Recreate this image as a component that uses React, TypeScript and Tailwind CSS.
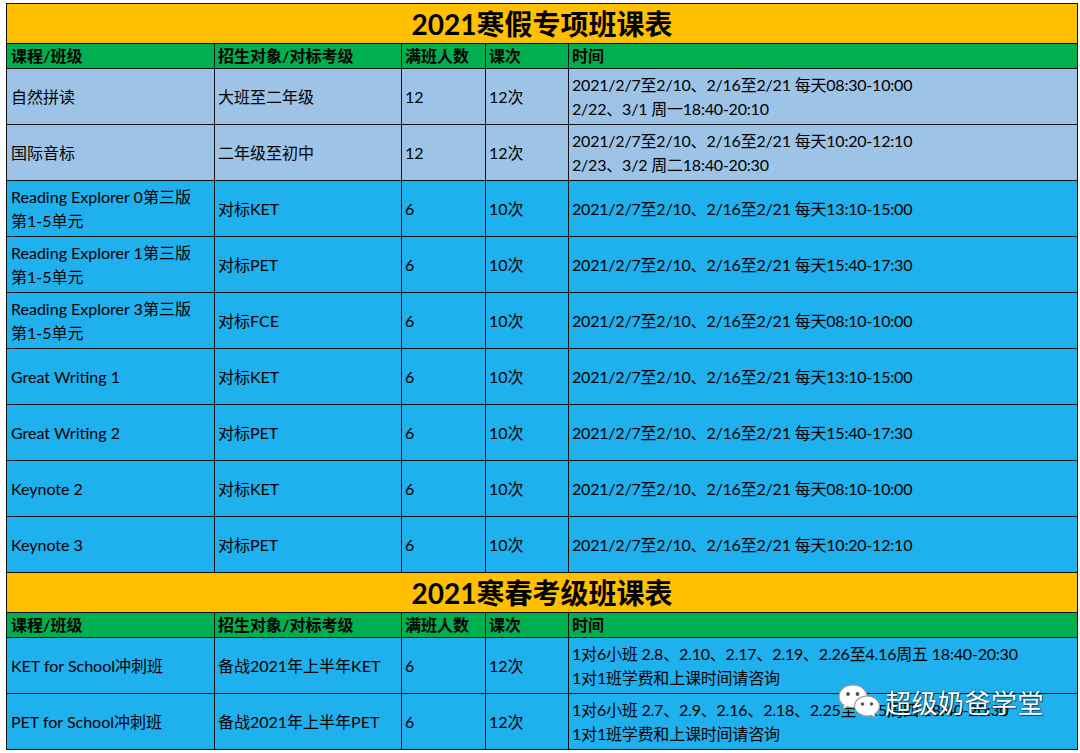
import React from "react";

type Row = {
  name: string[];
  target: string;
  size: string;
  count: string;
  time: string[];
  light?: boolean;
};

const WINTER: Row[] = [
  {
    name: ["自然拼读"],
    target: "大班至二年级",
    size: "12",
    count: "12次",
    time: ["2021/2/7至2/10、2/16至2/21 每天08:30-10:00", "2/22、3/1 周一18:40-20:10"],
    light: true,
  },
  {
    name: ["国际音标"],
    target: "二年级至初中",
    size: "12",
    count: "12次",
    time: ["2021/2/7至2/10、2/16至2/21 每天10:20-12:10", "2/23、3/2 周二18:40-20:30"],
    light: true,
  },
  {
    name: ["Reading Explorer 0第三版", "第1-5单元"],
    target: "对标KET",
    size: "6",
    count: "10次",
    time: ["2021/2/7至2/10、2/16至2/21 每天13:10-15:00"],
  },
  {
    name: ["Reading Explorer 1第三版", "第1-5单元"],
    target: "对标PET",
    size: "6",
    count: "10次",
    time: ["2021/2/7至2/10、2/16至2/21 每天15:40-17:30"],
  },
  {
    name: ["Reading Explorer 3第三版", "第1-5单元"],
    target: "对标FCE",
    size: "6",
    count: "10次",
    time: ["2021/2/7至2/10、2/16至2/21 每天08:10-10:00"],
  },
  {
    name: ["Great Writing 1"],
    target: "对标KET",
    size: "6",
    count: "10次",
    time: ["2021/2/7至2/10、2/16至2/21 每天13:10-15:00"],
  },
  {
    name: ["Great Writing 2"],
    target: "对标PET",
    size: "6",
    count: "10次",
    time: ["2021/2/7至2/10、2/16至2/21 每天15:40-17:30"],
  },
  {
    name: ["Keynote 2"],
    target: "对标KET",
    size: "6",
    count: "10次",
    time: ["2021/2/7至2/10、2/16至2/21 每天08:10-10:00"],
  },
  {
    name: ["Keynote 3"],
    target: "对标PET",
    size: "6",
    count: "10次",
    time: ["2021/2/7至2/10、2/16至2/21 每天10:20-12:10"],
  },
];

const SPRING: Row[] = [
  {
    name: ["KET for School冲刺班"],
    target: "备战2021年上半年KET",
    size: "6",
    count: "12次",
    time: ["1对6小班 2.8、2.10、2.17、2.19、2.26至4.16周五 18:40-20:30", "1对1班学费和上课时间请咨询"],
  },
  {
    name: ["PET for School冲刺班"],
    target: "备战2021年上半年PET",
    size: "6",
    count: "12次",
    time: ["1对6小班 2.7、2.9、2.16、2.18、2.25至4.15周四 18:40-20:30", "1对1班学费和上课时间请咨询"],
  },
];

const HEADERS = ["课程/班级", "招生对象/对标考级", "满班人数", "课次", "时间"];

const Title = ({ text }: { text: string }) => (
  <div className="col-span-5 h-[39px] bg-[#ffc000] flex items-center justify-center text-[28px] font-bold leading-none">
    {text}
  </div>
);

const HeaderRow = () => (
  <>
    {HEADERS.map((h, i) => (
      <div
        key={h}
        className={
          "h-[24px] bg-[#00b050] flex items-center font-bold " + (i === 0 ? "pl-[4px]" : "pl-[3px]")
        }
      >
        {h}
      </div>
    ))}
  </>
);

const Cell = ({
  lines,
  light,
  first,
  tight,
}: {
  lines: string[];
  light?: boolean;
  first?: boolean;
  tight?: boolean;
}) => (
  <div
    className={
      "h-[55px] flex flex-col justify-center leading-[24px] whitespace-nowrap overflow-hidden " +
      (light ? "bg-[#9dc3e6] " : "bg-[#1fb0ee] ") +
      (first ? "pl-[4px] " : "pl-[3px] ") +
      (tight ? "tracking-[-0.2px]" : "")
    }
  >
    {lines.map((l) => (
      <div key={l}>{l}</div>
    ))}
  </div>
);

const DataRows = ({ rows }: { rows: Row[] }) => (
  <>
    {rows.map((r, i) => (
      <React.Fragment key={i}>
        <Cell lines={r.name} light={r.light} first />
        <Cell lines={[r.target]} light={r.light} />
        <Cell lines={[r.size]} light={r.light} />
        <Cell lines={[r.count]} light={r.light} />
        <Cell lines={r.time} light={r.light} tight />
      </React.Fragment>
    ))}
  </>
);

const WeChatIcon = () => (
  <svg width="44" height="38" viewBox="0 0 44 38">
    {/* big bubble */}
    <path
      d="M15 1C7 1 1 6 1 12.5c0 3.6 1.9 6.6 4.8 8.7L4.6 25.5l4.9-2.7c1.7 .5 3.5 .8 5.5 .8 8 0 14-5 14-11.1S23 1 15 1z"
      fill="#ffffff"
      stroke="#9a9a9a"
      strokeWidth="1.2"
    />
    <circle cx="10" cy="10" r="1.9" fill="#555" />
    <circle cx="19.5" cy="10" r="1.9" fill="#555" />
    {/* small bubble */}
    <path
      d="M29 12c-7 0-12.5 4.5-12.5 10s5.5 10 12.5 10c1.5 0 3-.2 4.3-.6l4.3 2.4-1-3.7c2.9-1.8 4.9-4.8 4.9-8.1 0-5.5-5.5-10-12.5-10z"
      fill="#ffffff"
      stroke="#9a9a9a"
      strokeWidth="1.2"
    />
    <circle cx="24.5" cy="20" r="1.7" fill="#555" />
    <circle cx="33.5" cy="20" r="1.7" fill="#555" />
  </svg>
);

export default function App() {
  return (
    <div className="relative w-[1080px] h-[753px] overflow-hidden bg-white pl-[6px] pt-[3px] text-[16px] text-black font-['Lato','Noto_Sans_CJK_SC',sans-serif]">
      <div className="grid grid-cols-[207px_186px_83px_82px_508px] gap-px bg-[#111] p-px w-max">
        <Title text="2021寒假专项班课表" />
        <HeaderRow />
        <DataRows rows={WINTER} />
        <Title text="2021寒春考级班课表" />
        <HeaderRow />
        <DataRows rows={SPRING} />
      </div>

      {/* watermark */}
      <div className="absolute left-[838px] top-[684px] flex items-center gap-[3px]">
        <WeChatIcon />
        <span className="text-[26px] text-white leading-none tracking-[0.5px] [text-shadow:0_0_2px_rgba(0,0,0,0.7),1px_1px_1px_rgba(0,0,0,0.5)]">
          超级奶爸学堂
        </span>
      </div>
    </div>
  );
}
